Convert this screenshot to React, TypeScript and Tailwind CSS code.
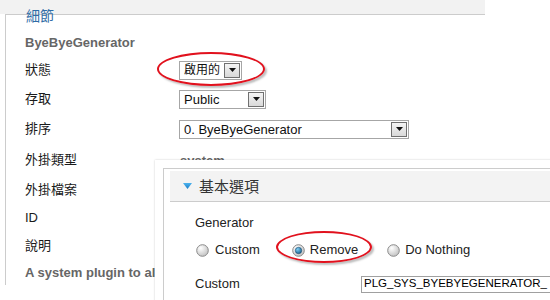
import React from "react";

function SelectBox({ label, width, cjk }: { label: string; width: string; cjk?: boolean }) {
  return (
    <div className={`flex h-[19px] items-center justify-between border border-[#a6a6a6] bg-white pl-[4px] pr-[1px] ${width}`}>
      <span className={`leading-none text-[#111] ${cjk ? "text-[12px]" : "text-[13px]"}`}>{label}</span>
      <span className="flex h-[15px] w-[16px] items-center justify-center border border-[#707070] bg-gradient-to-b from-[#f4f4f4] to-[#d9d9d9]">
        <svg width="7" height="4" viewBox="0 0 7 4">
          <path d="M0 0 L7 0 L3.5 4 Z" fill="#111" />
        </svg>
      </span>
    </div>
  );
}

function Radio({ checked }: { checked?: boolean }) {
  return (
    <svg width="13" height="13" viewBox="0 0 13 13" className="shrink-0">
      <defs>
        <radialGradient id="rg-off" cx="0.35" cy="0.3" r="0.8">
          <stop offset="0" stopColor="#ffffff" />
          <stop offset="1" stopColor="#bdbdbd" />
        </radialGradient>
        <radialGradient id="rg-dot" cx="0.35" cy="0.3" r="0.8">
          <stop offset="0" stopColor="#7fd0f7" />
          <stop offset="1" stopColor="#135a87" />
        </radialGradient>
      </defs>
      <circle cx="6.5" cy="6.5" r="5.8" fill="url(#rg-off)" stroke="#8a8a8a" strokeWidth="1" />
      {checked && <circle cx="6.5" cy="6.5" r="3.2" fill="url(#rg-dot)" stroke="#1b4d70" strokeWidth="0.6" />}
    </svg>
  );
}

const rows = [
  { label: "外掛類型", h: "h-[32px]", value: "system" },
  { label: "外掛檔案", h: "h-[28px]" },
  { label: "ID", h: "h-[28px]" },
  { label: "說明", h: "h-[28px]" },
];

export default function App() {
  return (
    <div className="relative h-[300px] w-[550px] overflow-hidden bg-white font-['Liberation_Sans','Noto_Sans_CJK_TC',sans-serif] text-[13px] text-[#1a1a1a]">
      {/* top strip */}
      <div className="h-[14px] w-[485px] bg-[#f2f2f2]" />

      {/* details fieldset */}
      <div className="relative ml-[5px] h-[271px] w-[480px] border-l border-t border-[#cccccc] pl-[19px] pt-[15px]">
        <div className="absolute left-[20px] top-[-7px] text-[14px] leading-[16px] text-[#2f6ca6]">細節</div>

        <div className="flex h-[26px] items-center text-[13px] font-bold text-[#666]">ByeByeGenerator</div>

        <div className="flex h-[28px] items-center">
          <div className="w-[154px]">狀態</div>
          <SelectBox label="啟用的" width="w-[63px]" cjk />
        </div>
        <div className="flex h-[30px] items-center">
          <div className="w-[154px]">存取</div>
          <SelectBox label="Public" width="w-[87px]" />
        </div>
        <div className="flex h-[30px] items-center">
          <div className="w-[154px]">排序</div>
          <SelectBox label="0. ByeByeGenerator" width="w-[230px]" />
        </div>

        {rows.map((r) => (
          <div key={r.label} className={`flex items-center ${r.h}`}>
            <div className="w-[155px] shrink-0">{r.label}</div>
            {r.value && <div className="mt-[1px] font-bold text-[#666]">{r.value}</div>}
          </div>
        ))}

        <div className="flex h-[26px] w-[130px] items-center overflow-hidden whitespace-nowrap font-bold text-[#666]">
          A system plugin to alt
        </div>
      </div>

      {/* red highlight around status select */}
      <div className="absolute left-[157px] top-[52px] h-[34px] w-[108px] rounded-[50%] border-2 border-[#e1111d] shadow-[2px_2px_2px_rgba(0,0,0,0.25)]" />

      {/* basic options panel */}
      <div className="absolute left-[155px] top-[160px] h-[160px] w-[420px] bg-white p-[8px] shadow-[0_0_2px_rgba(0,0,0,0.2)]">
        <div className="h-full border border-[#cccccc] bg-white">
          <div className="ml-[6px] mt-[2px] flex h-[31px] items-center gap-[7px] border-b border-[#cccccc] bg-[#f3f3f3] pl-[13px]">
            <svg width="9" height="6" viewBox="0 0 9 6">
              <defs>
                <linearGradient id="tri" x1="0" y1="0" x2="0" y2="1">
                  <stop offset="0" stopColor="#4cb3ee" />
                  <stop offset="1" stopColor="#1a7cc8" />
                </linearGradient>
              </defs>
              <path d="M0 0 L9 0 L4.5 6 Z" fill="url(#tri)" />
            </svg>
            <span className="text-[15px] leading-none text-[#333]">基本選項</span>
          </div>

          <div className="pl-[31px] text-[#222]">
            <div className="mt-[12px] flex h-[18px] items-center">Generator</div>
            <div className="mt-[9px] flex h-[18px] items-center pl-[1px]">
              <label className="flex items-center gap-[6px]">
                <Radio />
                <span>Custom</span>
              </label>
              <label className="ml-[32px] flex items-center gap-[5px]">
                <Radio checked />
                <span>Remove</span>
              </label>
              <label className="ml-[29px] flex items-center gap-[5px]">
                <Radio />
                <span>Do Nothing</span>
              </label>
            </div>
            <div className="mt-[16px] flex h-[18px] items-center">
              <div className="w-[166px] shrink-0">Custom</div>
              <div className="flex h-[17px] w-[220px] shrink-0 items-center overflow-hidden whitespace-nowrap border border-[#a0a0a0] bg-white pl-[2px] text-[11.5px] text-black">
                PLG_SYS_BYEBYEGENERATOR_
              </div>
            </div>
          </div>
        </div>
      </div>

      {/* red highlight around Remove */}
      <div className="absolute left-[276px] top-[231px] h-[32px] w-[96px] rounded-[50%] border-2 border-[#e1111d] shadow-[2px_2px_2px_rgba(0,0,0,0.25)]" />
    </div>
  );
}
